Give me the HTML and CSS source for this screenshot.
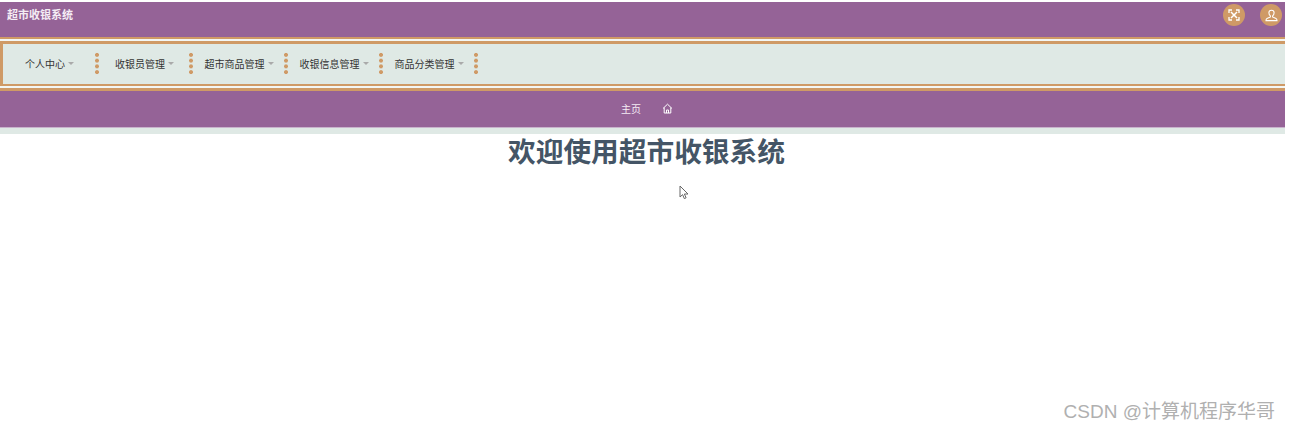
FILE: index.html
```html
<!DOCTYPE html>
<html lang="en">
<head>
    <meta charset="UTF-8">
    <title>超市收银系统</title>
    <link rel="stylesheet" href="styles.css">
</head>
<body>
<div class="page">
    <header class="top-bar">
        <span class="brand">超市收银系统</span>
        <div class="top-actions">
            <span class="round-btn">
                <svg width="12" height="12" viewBox="0 0 12 12" fill="none" stroke="#fff" stroke-width="1.5">
                    <path d="M3 3l6 6M9 3l-6 6"/>
                    <path d="M1 4V1h3M8 1h3v3M11 8v3H8M4 11H1V8" stroke-width="1.3"/>
                </svg>
            </span>
            <span class="round-btn">
                <svg width="13" height="13" viewBox="0 0 13 13" fill="none" stroke="#fff" stroke-width="1.1">
                    <path d="M6.5 1.2c-1.6 0-2.6 1.1-2.6 2.6 0 1.3.7 2.5 1.5 3.1v1L2 9.4c-.7.3-1 .9-1 2.2h11c0-1.3-.3-1.9-1-2.2L7.6 7.9v-1c.8-.6 1.5-1.8 1.5-3.1 0-1.5-1-2.6-2.6-2.6z"/>
                </svg>
            </span>
        </div>
    </header>

    <nav class="nav-menu">
        <ul class="nav-list">
            <li class="nav-item first">个人中心<i class="caret"></i></li>
            <li class="nav-item second">收银员管理<i class="caret"></i></li>
            <li class="nav-item">超市商品管理<i class="caret"></i></li>
            <li class="nav-item">收银信息管理<i class="caret"></i></li>
            <li class="nav-item">商品分类管理<i class="caret"></i></li>
        </ul>
    </nav>

    <div class="crumb-bar">
        <span>主页</span>
        <svg width="11" height="11" viewBox="0 0 11 11" fill="none" stroke="#fff" stroke-width="1">
            <path d="M1 5.5L5.5 1.2 10 5.5M2.2 4.6V10h6.6V4.6M4.5 10V7h2v3"/>
        </svg>
    </div>
    <div class="crumb-gap"></div>

    <main class="content">
        <h1>欢迎使用超市收银系统</h1>
        <svg class="cursor" width="10" height="15" viewBox="0 0 10 15" fill="#fff" stroke="#666" stroke-width="1">
            <path d="M1 1v11l2.6-2.4 1.7 4 1.8-.8-1.7-3.8H9z"/>
        </svg>
    </main>
</div>
<span class="watermark">CSDN @计算机程序华哥</span>
</body>
</html>
```

FILE: styles.css
```css
* {
    box-sizing: border-box;
}

body {
    margin: 0;
    height: 431px;
    overflow: hidden;
    background: #fff;
    font-family: "Liberation Sans", "Noto Sans CJK SC", sans-serif;
    position: relative;
}

.page {
    width: 1285px;
    padding-top: 2px;
}

.top-bar {
    height: 35px;
    background: #956397;
    display: flex;
    align-items: flex-start;
    justify-content: space-between;
    padding: 2px 3px 0 7px;
}

.brand {
    color: #f4ecf4;
    font-size: 11px;
    font-weight: bold;
    line-height: 23px;
}

.top-actions {
    display: flex;
    gap: 15px;
}

.round-btn {
    width: 22px;
    height: 22px;
    border-radius: 50%;
    background: #cf9a66;
    display: flex;
    align-items: center;
    justify-content: center;
}

.nav-menu {
    height: 54px;
    background: #f3f6f4;
    border-top: 2px solid #cf9a66;
    border-bottom: 3px solid #cf9a66;
    padding: 2px 0;
}

.nav-list {
    list-style: none;
    margin: 0;
    padding: 0;
    height: 100%;
    display: flex;
    align-items: center;
    background: #dfe9e5;
    border: solid #cf9a66;
    border-width: 3px 0 2px 3px;
}

.nav-item {
    display: flex;
    align-items: center;
    justify-content: center;
    height: 100%;
    width: 95px;
    padding: 0 3px 2px 0;
    font-size: 10px;
    color: #333;
    position: relative;
}

.nav-item.first {
    width: 96px;
}

.nav-item.second {
    width: 94px;
}

/* dotted divider on the right of each item */
.nav-item::after {
    content: "";
    position: absolute;
    right: 0;
    top: 8px;
    width: 4px;
    height: 23px;
    background: radial-gradient(circle, #cf9a66 1.8px, transparent 2.2px) 0 0 / 4px 5.75px repeat-y;
}

.caret {
    margin-left: 3px;
    border: 3px solid transparent;
    border-top-color: #aaa;
    border-bottom: 0;
}

.crumb-bar {
    height: 36px;
    background: #956397;
    display: flex;
    align-items: center;
    justify-content: center;
    gap: 21px;
    color: #f4ecf4;
    font-size: 10px;
    padding: 0 0 2px 9px;
}

.crumb-gap {
    height: 7px;
    background: #dfe9e5;
    border-top: 1px solid #c9b3cc;
}

.content {
    position: relative;
    text-align: center;
}

.content h1 {
    margin: 0;
    font-size: 27.7px;
    line-height: 36px;
    padding-top: 1px;
    color: #445566;
    padding-left: 8px;
}

.cursor {
    position: absolute;
    left: 679px;
    top: 51px;
}

.watermark {
    position: absolute;
    right: 15px;
    top: 400px;
    font-size: 19px;
    line-height: 24px;
    color: #b0b0b0;
}
```
